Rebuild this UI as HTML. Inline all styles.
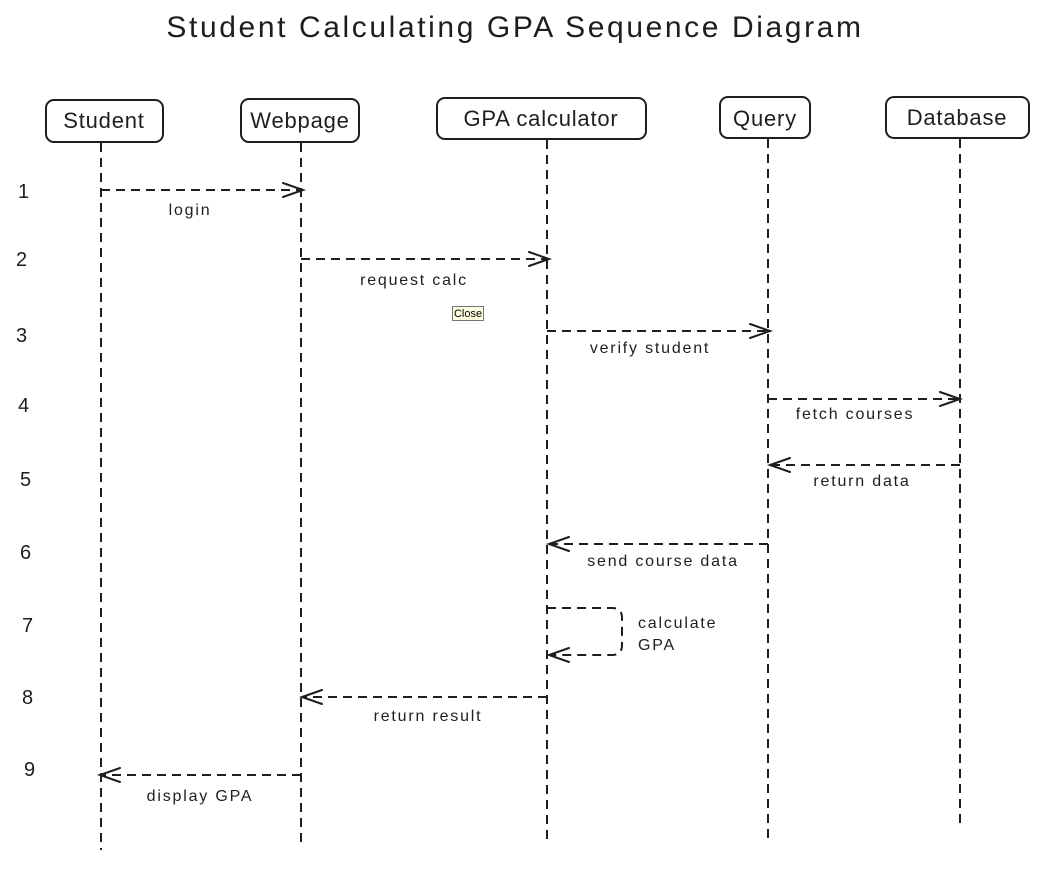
<!DOCTYPE html>
<html><head><meta charset="utf-8"><style>
html,body{margin:0;padding:0;background:#fff;width:1052px;height:870px;overflow:hidden}
svg{display:block}
text{font-family:"Liberation Sans",sans-serif;fill:#1e1e1e}
.tip{position:absolute;left:452px;top:306px;width:32px;height:15px;background:#ffffe1;border:1px solid #767676;font:11px "Liberation Sans",sans-serif;line-height:15px;text-align:center;box-sizing:border-box}
</style></head><body>
<svg width="1052" height="870" viewBox="0 0 1052 870">
<text x="515" y="37" font-size="30" text-anchor="middle" letter-spacing="2.6">Student Calculating GPA Sequence Diagram</text>
<g fill="none" stroke="#1e1e1e" stroke-width="2">
<rect x="46" y="100" width="117" height="42" rx="8"/>
<rect x="241" y="99" width="118" height="43" rx="8"/>
<rect x="437" y="98" width="209" height="41" rx="8"/>
<rect x="720" y="97" width="90" height="41" rx="8"/>
<rect x="886" y="97" width="143" height="41" rx="8"/>
</g>
<g font-size="22" text-anchor="middle" letter-spacing="0.8">
<text x="104" y="128">Student</text>
<text x="300" y="128">Webpage</text>
<text x="541" y="126">GPA calculator</text>
<text x="765" y="126">Query</text>
<text x="957" y="125">Database</text>
</g>
<g fill="none" stroke="#1e1e1e" stroke-width="2" stroke-dasharray="9 6">
<line x1="101" y1="143" x2="101" y2="850"/>
<line x1="301" y1="143" x2="301" y2="845"/>
<line x1="547" y1="140" x2="547" y2="843"/>
<line x1="768" y1="139" x2="768" y2="838"/>
<line x1="960" y1="139" x2="960" y2="828"/>
<line x1="101" y1="190" x2="302" y2="190"/>
<line x1="301" y1="259" x2="548" y2="259"/>
<line x1="547" y1="331" x2="769" y2="331"/>
<line x1="768" y1="399" x2="959" y2="399"/>
<line x1="960" y1="465" x2="770" y2="465"/>
<line x1="768" y1="544" x2="549" y2="544"/>
<path d="M547 608 L612 608 Q622 608 622 618 L622 645 Q622 655 612 655 L549 655"/>
<line x1="547" y1="697" x2="302" y2="697"/>
<line x1="301" y1="775" x2="100" y2="775"/>
</g>
<g fill="none" stroke="#1e1e1e" stroke-width="2" stroke-linecap="round">
<path d="M283 183 L303 190 L283 197"/>
<path d="M529 252 L549 259 L529 266"/>
<path d="M750 324 L770 331 L750 338"/>
<path d="M940 392 L960 399 L940 406"/>
<path d="M790 458 L770 465 L790 472"/>
<path d="M569 537 L549 544 L569 551"/>
<path d="M569 648 L549 655 L569 662"/>
<path d="M322 690 L302 697 L322 704"/>
<path d="M120 768 L100 775 L120 782"/>
</g>
<g font-size="16" text-anchor="middle" letter-spacing="1.8">
<text x="190" y="215">login</text>
<text x="414" y="285">request calc</text>
<text x="650" y="353">verify student</text>
<text x="855" y="419">fetch courses</text>
<text x="862" y="486">return data</text>
<text x="663" y="566">send course data</text>
<text x="428" y="721">return result</text>
<text x="200" y="801">display GPA</text>
</g>
<g font-size="16" letter-spacing="1.8">
<text x="638" y="628">calculate</text>
<text x="638" y="650">GPA</text>
</g>
<g font-size="20">
<text x="18" y="198">1</text>
<text x="16" y="266">2</text>
<text x="16" y="342">3</text>
<text x="18" y="412">4</text>
<text x="20" y="486">5</text>
<text x="20" y="559">6</text>
<text x="22" y="632">7</text>
<text x="22" y="704">8</text>
<text x="24" y="776">9</text>
</g>
</svg>
<div class="tip">Close</div>
</body></html>
